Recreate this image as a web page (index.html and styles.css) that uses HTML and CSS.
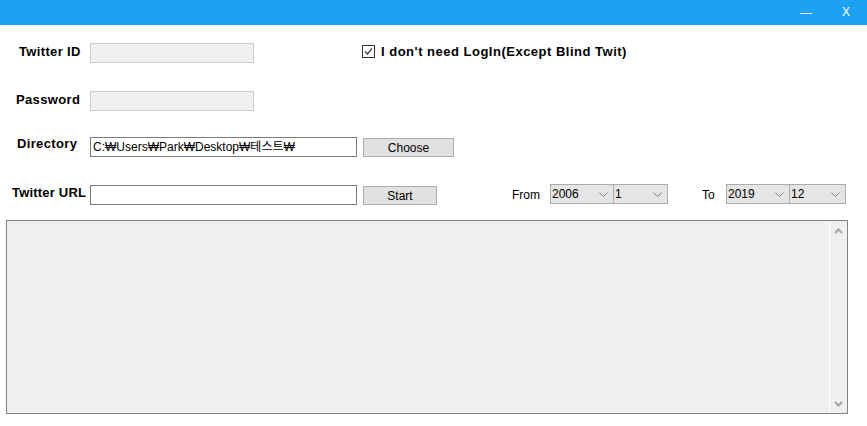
FILE: index.html
```html
<!DOCTYPE html>
<html>
<head>
<meta charset="utf-8">
<link rel="stylesheet" href="styles.css">
</head>
<body>
<div class="titlebar">
  <span class="tb-min"></span>
  <span class="tb-close">X</span>
</div>
<div class="form">
  <div class="row row-id">
    <label class="lbl lbl-id">Twitter ID</label>
    <div class="field field-short field-disabled"></div>
    <div class="check">
      <span class="checkbox">
        <svg width="11" height="11" viewBox="0 0 11 11"><path d="M2 5.5 L4.5 8 L9 2.5" fill="none" stroke="#3c3c3c" stroke-width="1.2"/></svg>
      </span>
      <span class="check-text">I don't need LogIn(Except Blind Twit)</span>
    </div>
  </div>
  <div class="row row-pw">
    <label class="lbl lbl-pw">Password</label>
    <div class="field field-short field-disabled"></div>
  </div>
  <div class="row row-dir">
    <label class="lbl lbl-dir">Directory</label>
    <div class="field field-long">C:₩Users₩Park₩Desktop₩테스트₩</div>
    <div class="btn btn-choose">Choose</div>
  </div>
  <div class="row row-url">
    <label class="lbl lbl-url">Twitter URL</label>
    <div class="field field-long"></div>
    <div class="btn btn-start">Start</div>
    <span class="range-lbl range-from">From</span>
    <div class="sel sel-year"><span>2006</span><svg class="chev" width="9" height="5" viewBox="0 0 9 5"><path d="M0.5 0.5 L4.5 4.5 L8.5 0.5" fill="none" stroke="#808080" stroke-width="1"/></svg></div>
    <div class="sel sel-month"><span>1</span><svg class="chev" width="9" height="5" viewBox="0 0 9 5"><path d="M0.5 0.5 L4.5 4.5 L8.5 0.5" fill="none" stroke="#808080" stroke-width="1"/></svg></div>
    <span class="range-lbl range-to">To</span>
    <div class="sel sel-year"><span>2019</span><svg class="chev" width="9" height="5" viewBox="0 0 9 5"><path d="M0.5 0.5 L4.5 4.5 L8.5 0.5" fill="none" stroke="#808080" stroke-width="1"/></svg></div>
    <div class="sel sel-month2"><span>12</span><svg class="chev" width="9" height="5" viewBox="0 0 9 5"><path d="M0.5 0.5 L4.5 4.5 L8.5 0.5" fill="none" stroke="#808080" stroke-width="1"/></svg></div>
  </div>
  <div class="log">
    <div class="log-body"></div>
    <div class="scrollbar">
      <svg width="9" height="6" viewBox="0 0 9 6"><path d="M1 5 L4.5 1.5 L8 5" fill="none" stroke="#a6a6a6" stroke-width="2"/></svg>
      <svg width="9" height="6" viewBox="0 0 9 6"><path d="M1 1 L4.5 4.5 L8 1" fill="none" stroke="#a6a6a6" stroke-width="2"/></svg>
    </div>
  </div>
</div>
</body>
</html>
```
FILE: styles.css
```css
html, body {
  margin: 0;
  padding: 0;
  background: #ffffff;
}
body {
  width: 867px;
  height: 426px;
  overflow: hidden;
  font-family: "Liberation Sans", "Noto Sans CJK KR", sans-serif;
  font-size: 12px;
  color: #000;
}
.titlebar {
  height: 25px;
  background: #1da1f2;
  display: flex;
  align-items: center;
  justify-content: flex-end;
  color: #fff;
}
.tb-min {
  width: 12px;
  height: 1px;
  background: #fff;
  margin-right: 30px;
  margin-top: 1px;
}
.tb-close {
  font-size: 12px;
  width: 10px;
  margin-right: 15px;
  line-height: 12px;
  margin-top: -1px;
}
.form {
  display: flex;
  flex-direction: column;
}
.row {
  display: flex;
  align-items: center;
  height: 20px;
}
.row-id { margin-top: 18px; }
.row-pw { margin-top: 28px; }
.row-dir { margin-top: 26px; }
.row-url { margin-top: 28px; }
.lbl {
  width: 90px;
  box-sizing: border-box;
  font-weight: bold;
  font-size: 13px;
  letter-spacing: 0.35px;
  white-space: nowrap;
}
.lbl-id { padding-left: 19px; margin-top: -3px; }
.lbl-pw { padding-left: 16px; margin-top: -3px; }
.lbl-dir { padding-left: 17px; margin-top: -7px; }
.lbl-url { padding-left: 12px; margin-top: -5px; letter-spacing: 0.2px; }
.field {
  box-sizing: border-box;
  height: 20px;
  border: 1px solid #7a7a7a;
  background: #fff;
  padding: 1px 2px;
  line-height: 16px;
  white-space: nowrap;
  overflow: hidden;
}
.field-short { width: 164px; }
.field-long { width: 267px; }
.field-disabled {
  border-color: #cccccc;
  background: #f0f0f0;
}
.check {
  display: flex;
  align-items: center;
  margin-left: 108px;
  margin-top: -3px;
}
.checkbox {
  width: 13px;
  height: 13px;
  box-sizing: border-box;
  border: 1px solid #333333;
  background: #fff;
  display: flex;
  align-items: center;
  justify-content: center;
}
.check-text {
  margin-left: 6px;
  font-weight: bold;
  font-size: 13px;
  letter-spacing: 0.5px;
}
.btn {
  box-sizing: border-box;
  height: 19px;
  margin-left: 6px;
  background: #e1e1e1;
  border: 1px solid #adadad;
  display: flex;
  align-items: center;
  justify-content: center;
}
.btn-choose { width: 91px; margin-top: 1px; }
.btn-start { width: 74px; margin-top: 1px; }
.range-lbl {
  margin-top: -1px;
}
.range-from { margin-left: 75px; width: 38px; }
.range-to { margin-left: 34px; width: 24px; }
.sel {
  box-sizing: border-box;
  height: 20px;
  margin-top: -2px;
  background: #e5e5e5;
  border: 1px solid #acacac;
  display: flex;
  align-items: center;
  justify-content: space-between;
  padding: 0 5px 0 1px;
}
.sel + .sel { border-left: none; }
.sel-year { width: 64px; }
.sel-month { width: 54px; }
.sel-month2 { width: 56px; }
.chev { margin-top: 1px; }
.log {
  margin-top: 15px;
  margin-left: 6px;
  width: 842px;
  height: 194px;
  box-sizing: border-box;
  border: 1px solid #828282;
  background: #efefef;
  display: flex;
}
.log-body {
  flex: 1;
}
.scrollbar {
  width: 17px;
  border-left: 1px solid #ffffff;
  display: flex;
  flex-direction: column;
  justify-content: space-between;
  align-items: center;
  padding: 7px 0 6px;
}
```
